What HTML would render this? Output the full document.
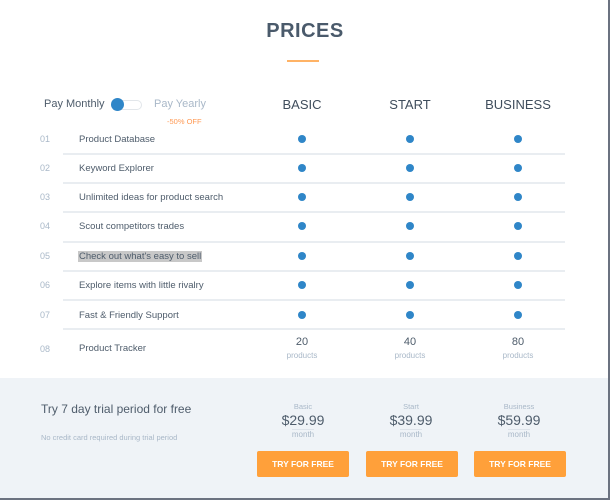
<!DOCTYPE html>
<html><head><meta charset="utf-8"><style>
*{margin:0;padding:0;box-sizing:border-box}
body{width:610px;height:500px;position:relative;background:#fff;font-family:"Liberation Sans",sans-serif;overflow:hidden}
.a{position:absolute}
.c{text-align:center}
.num{position:absolute;left:40px;font-size:9px;color:#a9b8c8}
.lab{position:absolute;left:79px;font-size:9.5px;color:#4e5c6b}
.dot{position:absolute;width:8px;height:8px;border-radius:50%;background:#2f86c8}
.sep{position:absolute;left:63px;width:502px;height:2px;background:#e9edf1}
.btn{position:absolute;top:451px;width:92px;height:26px;background:#ffa03a;border-radius:2px;color:#fff;font-weight:bold;font-size:8.5px;text-align:center;line-height:26px}
.col{position:absolute;width:100px;text-align:center}
</style></head><body>
<div class="a c" style="left:0;width:610px;top:20px;font-size:20px;font-weight:bold;color:#4a5a6b;letter-spacing:0.5px">PRICES</div>
<div class="a" style="left:287px;top:60px;width:32px;height:2px;background:#ffb366"></div>

<div class="a" style="left:44px;top:98px;font-size:11px;color:#4e5c6b">Pay Monthly</div>
<div class="a" style="left:112px;top:100px;width:30px;height:10px;border:1px solid #e2e6ea;border-radius:6px;background:#fff"></div>
<div class="a" style="left:111px;top:98px;width:13px;height:13px;border-radius:50%;background:#2f86c8"></div>
<div class="a" style="left:154px;top:98px;font-size:11px;color:#a9b8c8">Pay Yearly</div>
<div class="a" style="left:167px;top:117px;font-size:7.5px;color:#ff9a55">-50% OFF</div>

<div class="col" style="left:252px;top:97px;font-size:13px;color:#3f4d5c">BASIC</div>
<div class="col" style="left:360px;top:97px;font-size:13px;color:#3f4d5c">START</div>
<div class="col" style="left:468px;top:97px;font-size:13px;color:#3f4d5c">BUSINESS</div>

<div class="num" style="top:134px">01</div><div class="lab" style="top:134px">Product Database</div>
<div class="sep" style="top:153px"></div>
<div class="num" style="top:163px">02</div><div class="lab" style="top:163px">Keyword Explorer</div>
<div class="sep" style="top:182px"></div>
<div class="num" style="top:192px">03</div><div class="lab" style="top:192px">Unlimited ideas for product search</div>
<div class="sep" style="top:211px"></div>
<div class="num" style="top:221px">04</div><div class="lab" style="top:221px">Scout competitors trades</div>
<div class="sep" style="top:241px"></div>
<div class="num" style="top:251px">05</div><div class="lab" style="top:251px;background:#c8c8c8;padding:0 1px;margin-left:-1px">Check out what's easy to sell</div>
<div class="sep" style="top:270px"></div>
<div class="num" style="top:280px">06</div><div class="lab" style="top:280px">Explore items with little rivalry</div>
<div class="sep" style="top:299px"></div>
<div class="num" style="top:310px">07</div><div class="lab" style="top:310px">Fast &amp; Friendly Support</div>
<div class="sep" style="top:328px"></div>
<div class="num" style="top:344px">08</div><div class="lab" style="top:343px">Product Tracker</div>

<div class="dot" style="left:298px;top:135px"></div><div class="dot" style="left:406px;top:135px"></div><div class="dot" style="left:514px;top:135px"></div>
<div class="dot" style="left:298px;top:164px"></div><div class="dot" style="left:406px;top:164px"></div><div class="dot" style="left:514px;top:164px"></div>
<div class="dot" style="left:298px;top:193px"></div><div class="dot" style="left:406px;top:193px"></div><div class="dot" style="left:514px;top:193px"></div>
<div class="dot" style="left:298px;top:222px"></div><div class="dot" style="left:406px;top:222px"></div><div class="dot" style="left:514px;top:222px"></div>
<div class="dot" style="left:298px;top:252px"></div><div class="dot" style="left:406px;top:252px"></div><div class="dot" style="left:514px;top:252px"></div>
<div class="dot" style="left:298px;top:281px"></div><div class="dot" style="left:406px;top:281px"></div><div class="dot" style="left:514px;top:281px"></div>
<div class="dot" style="left:298px;top:311px"></div><div class="dot" style="left:406px;top:311px"></div><div class="dot" style="left:514px;top:311px"></div>

<div class="col" style="left:252px;top:336px;font-size:11px;color:#4e5c6b">20</div>
<div class="col" style="left:360px;top:336px;font-size:11px;color:#4e5c6b">40</div>
<div class="col" style="left:468px;top:336px;font-size:11px;color:#4e5c6b">80</div>
<div class="col" style="left:252px;top:351px;font-size:8px;color:#a9b8c8">products</div>
<div class="col" style="left:360px;top:351px;font-size:8px;color:#a9b8c8">products</div>
<div class="col" style="left:468px;top:351px;font-size:8px;color:#a9b8c8">products</div>

<div class="a" style="left:0;top:378px;width:610px;height:122px;background:#eff3f7"></div>
<div class="a" style="left:608px;top:0;width:2px;height:500px;background:#6b7280"></div>
<div class="a" style="left:0;top:498px;width:610px;height:2px;background:#6b7280"></div>

<div class="a" style="left:41px;top:402px;font-size:12px;color:#4e5c6b">Try 7 day trial period for free</div>
<div class="a" style="left:41px;top:433px;font-size:7.5px;color:#a9b8c8">No credit card required during trial period</div>

<div class="col" style="left:253px;top:402px;font-size:7.5px;color:#a9b8c8">Basic</div>
<div class="col" style="left:361px;top:402px;font-size:7.5px;color:#a9b8c8">Start</div>
<div class="col" style="left:469px;top:402px;font-size:7.5px;color:#a9b8c8">Business</div>
<div class="col" style="left:253px;top:412px;font-size:14px;color:#4e5c6b">$29.99</div>
<div class="col" style="left:361px;top:412px;font-size:14px;color:#4e5c6b">$39.99</div>
<div class="col" style="left:469px;top:412px;font-size:14px;color:#4e5c6b">$59.99</div>
<div class="a" style="left:292px;top:429px;width:22px;height:1px;background:#dde3ea"></div>
<div class="a" style="left:400px;top:429px;width:22px;height:1px;background:#dde3ea"></div>
<div class="a" style="left:508px;top:429px;width:22px;height:1px;background:#dde3ea"></div>
<div class="col" style="left:253px;top:430px;font-size:8px;color:#a9b8c8">month</div>
<div class="col" style="left:361px;top:430px;font-size:8px;color:#a9b8c8">month</div>
<div class="col" style="left:469px;top:430px;font-size:8px;color:#a9b8c8">month</div>

<div class="btn" style="left:257px">TRY FOR FREE</div>
<div class="btn" style="left:366px">TRY FOR FREE</div>
<div class="btn" style="left:474px">TRY FOR FREE</div>
</body></html>
